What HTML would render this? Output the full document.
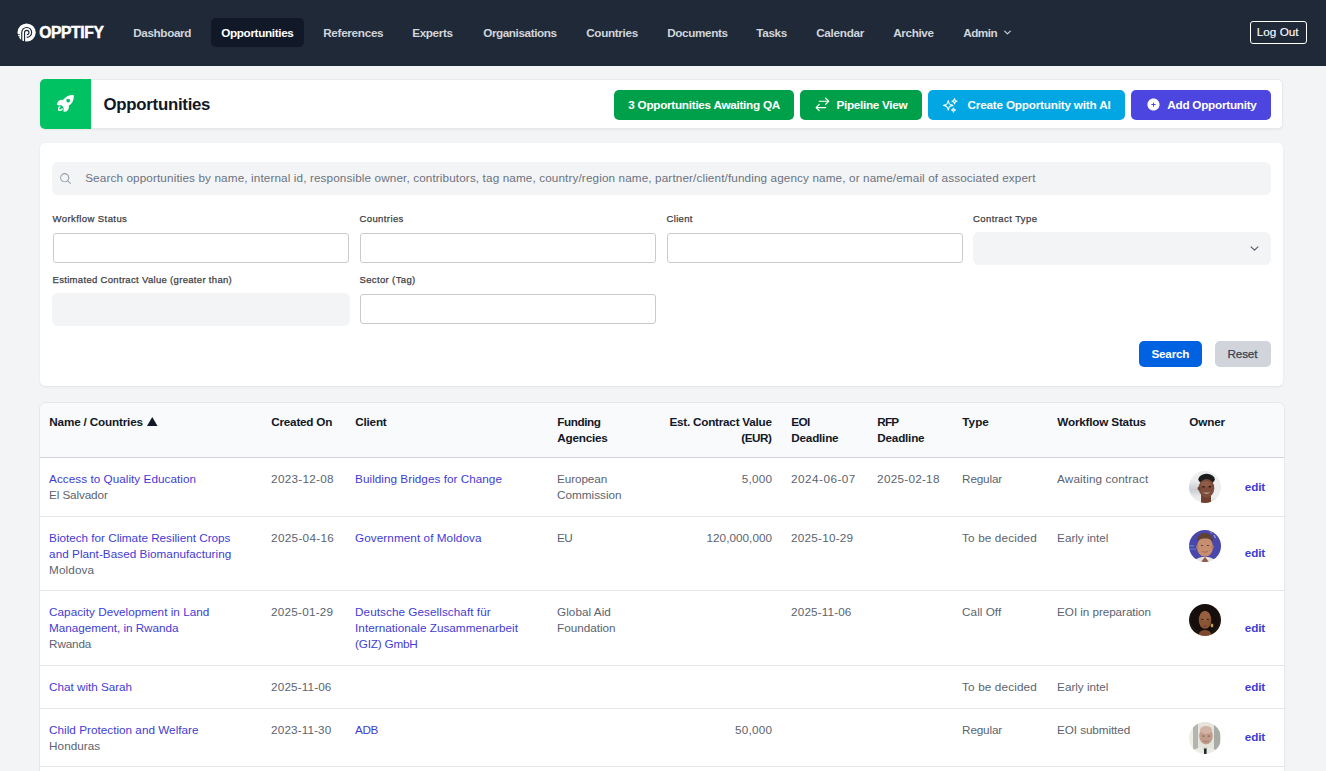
<!DOCTYPE html><html><head><meta charset="utf-8"><style>
html,body{margin:0;padding:0}
body{width:1326px;height:771px;overflow:hidden;position:relative;background:#f3f4f6;font-family:"Liberation Sans",sans-serif;}
.t{position:absolute;white-space:nowrap}
.b{position:absolute;box-sizing:border-box}
</style></head><body>
<div class="b" style="left:0px;top:0px;width:1326px;height:66px;background:#1f2937"></div>
<svg class="b" style="left:15px;top:21px;" width="24" height="24" viewBox="0 0 24 24"><circle cx="11.6" cy="11.5" r="9.1" fill="#fff"/>
<path d="M6.75 22V11.4A4.95 4.95 0 1 1 11.7 16.35" fill="none" stroke="#1f2937" stroke-width="1.15"/>
<path d="M9.55 22V11.5A2.2 2.2 0 1 1 11.75 13.7" fill="none" stroke="#1f2937" stroke-width="1.15"/>
<path d="M1.5 13.6h3.3M1.8 15.8h3" stroke="#1f2937" stroke-width="0.8"/></svg>
<div class="t" style="left:39.3px;letter-spacing:-0.371px;top:23.0px;font-size:15.6px;line-height:20px;font-weight:700;color:#fff;-webkit-text-stroke:0.5px #fff;">OPPTIFY</div>
<div class="b" style="left:211px;top:18px;width:93px;height:29px;background:#111827;border-radius:5px"></div>
<div class="t" style="left:133.2px;letter-spacing:-0.375px;top:25px;font-size:11.73px;line-height:15px;font-weight:700;color:#d1d5db;">Dashboard</div>
<div class="t" style="left:221.2px;letter-spacing:-0.344px;top:25px;font-size:11.73px;line-height:15px;font-weight:700;color:#fff;">Opportunities</div>
<div class="t" style="left:323.2px;letter-spacing:-0.307px;top:25px;font-size:11.73px;line-height:15px;font-weight:700;color:#d1d5db;">References</div>
<div class="t" style="left:412.2px;letter-spacing:-0.376px;top:25px;font-size:11.73px;line-height:15px;font-weight:700;color:#d1d5db;">Experts</div>
<div class="t" style="left:483.2px;letter-spacing:-0.416px;top:25px;font-size:11.73px;line-height:15px;font-weight:700;color:#d1d5db;">Organisations</div>
<div class="t" style="left:586.2px;letter-spacing:-0.338px;top:25px;font-size:11.73px;line-height:15px;font-weight:700;color:#d1d5db;">Countries</div>
<div class="t" style="left:667.2px;letter-spacing:-0.373px;top:25px;font-size:11.73px;line-height:15px;font-weight:700;color:#d1d5db;">Documents</div>
<div class="t" style="left:756.2px;letter-spacing:-0.298px;top:25px;font-size:11.73px;line-height:15px;font-weight:700;color:#d1d5db;">Tasks</div>
<div class="t" style="left:816.2px;letter-spacing:-0.287px;top:25px;font-size:11.73px;line-height:15px;font-weight:700;color:#d1d5db;">Calendar</div>
<div class="t" style="left:893.2px;letter-spacing:-0.359px;top:25px;font-size:11.73px;line-height:15px;font-weight:700;color:#d1d5db;">Archive</div>
<div class="t" style="left:963.2px;letter-spacing:-0.502px;top:25px;font-size:11.73px;line-height:15px;font-weight:700;color:#d1d5db;">Admin</div>
<svg class="b" style="left:1003px;top:28px;" width="9" height="9" viewBox="0 0 24 24"><path d="m19.5 8.25-7.5 7.5-7.5-7.5" fill="none" stroke="#d1d5db" stroke-width="3" stroke-linecap="round" stroke-linejoin="round"/></svg>
<div class="b" style="left:1250px;top:21px;width:57px;height:23px;border:1px solid #fff;border-radius:3px"></div>
<div class="t" style="left:1256.8px;letter-spacing:0.007px;-webkit-text-stroke:0.12px #fff;top:24.200000000000003px;font-size:11.73px;line-height:15px;font-weight:400;color:#fff;">Log Out</div>
<div class="b" style="left:40px;top:79px;width:1243px;height:50px;background:#fff;border-radius:5px;border:1px solid #e8e9ec;box-shadow:0 1px 2px rgba(0,0,0,.05)"></div>
<div class="b" style="left:40px;top:79px;width:51px;height:50px;background:#00c262;border-radius:5px 0 0 5px"></div>
<svg class="b" style="left:56.3px;top:94.1px;" width="18.8" height="18.8" viewBox="0 0 20 20"><path fill="#fff" fill-rule="evenodd" d="M4.606 12.97a.75.75 0 0 1-.134 1.051 2.494 2.494 0 0 0-.93 2.437 2.494 2.494 0 0 0 2.437-.93.75.75 0 1 1 1.186.918 3.995 3.995 0 0 1-4.482 1.332.75.75 0 0 1-.461-.461 3.994 3.994 0 0 1 1.332-4.482.75.75 0 0 1 1.052.134Z"/>
<path fill="#fff" fill-rule="evenodd" d="M5.752 12A13.07 13.07 0 0 0 8 14.248v4.002c0 .414.336.75.75.75a5 5 0 0 0 4.797-6.414 12.984 12.984 0 0 0 5.45-10.848.75.75 0 0 0-.735-.735 12.984 12.984 0 0 0-10.849 5.45A5 5 0 0 0 1 11.25c.001.414.337.75.751.75h4.002ZM13 9a2 2 0 1 0 0-4 2 2 0 0 0 0 4Z"/></svg>
<div class="t" style="left:103.5px;letter-spacing:-0.262px;top:93.7px;font-size:16.81px;line-height:22px;font-weight:700;color:#111827;">Opportunities</div>
<div class="b" style="left:614px;top:90px;width:180px;height:30px;background:#00a04a;border-radius:5px"></div>
<div class="t" style="left:628.3px;letter-spacing:-0.268px;top:96.8px;font-size:11.73px;line-height:15px;font-weight:700;color:#fff;">3 Opportunities Awaiting QA</div>
<div class="b" style="left:800px;top:90px;width:122px;height:30px;background:#00a04a;border-radius:5px"></div>
<svg class="b" style="left:813.6px;top:96.3px;" width="16.8" height="16.8" viewBox="0 0 24 24"><path d="M7.5 21 3 16.5m0 0L7.5 12M3 16.5h13.5m0-13.5L21 7.5m0 0L16.5 12M21 7.5H7.5" fill="none" stroke="#fff" stroke-width="1.7" stroke-linecap="round" stroke-linejoin="round"/></svg>
<div class="t" style="left:836.5px;letter-spacing:-0.296px;top:96.8px;font-size:11.73px;line-height:15px;font-weight:700;color:#fff;">Pipeline View</div>
<div class="b" style="left:928px;top:90px;width:197px;height:30px;background:#02a6e3;border-radius:5px"></div>
<svg class="b" style="left:941.7px;top:96.7px;" width="16.7" height="16.7" viewBox="0 0 24 24"><path d="M9.813 15.904 9 18.75l-.813-2.846a4.5 4.5 0 0 0-3.09-3.09L2.25 12l2.846-.813a4.5 4.5 0 0 0 3.09-3.09L9 5.25l.813 2.846a4.5 4.5 0 0 0 3.09 3.09L15.75 12l-2.846.813a4.5 4.5 0 0 0-3.09 3.09ZM18.259 8.715 18 9.75l-.259-1.035a3.375 3.375 0 0 0-2.455-2.456L14.25 6l1.036-.259a3.375 3.375 0 0 0 2.455-2.456L18 2.25l.259 1.035a3.375 3.375 0 0 0 2.456 2.456L21.75 6l-1.035.259a3.375 3.375 0 0 0-2.456 2.456ZM16.894 20.567 16.5 21.75l-.394-1.183a2.25 2.25 0 0 0-1.423-1.423L13.5 18.75l1.183-.394a2.25 2.25 0 0 0 1.423-1.423l.394-1.183.394 1.183a2.25 2.25 0 0 0 1.423 1.423l1.183.394-1.183.394a2.25 2.25 0 0 0-1.423 1.423Z" fill="none" stroke="#fff" stroke-width="1.6" stroke-linecap="round" stroke-linejoin="round"/></svg>
<div class="t" style="left:967.5px;letter-spacing:-0.194px;top:96.8px;font-size:11.73px;line-height:15px;font-weight:700;color:#fff;">Create Opportunity with AI</div>
<div class="b" style="left:1131px;top:90px;width:140px;height:30px;background:#4c45e0;border-radius:5px"></div>
<svg class="b" style="left:1145.5px;top:97px;" width="15" height="15" viewBox="0 0 24 24"><path fill="#fff" fill-rule="evenodd" d="M12 2.25c-5.385 0-9.75 4.365-9.75 9.75s4.365 9.75 9.75 9.75 9.75-4.365 9.75-9.75S17.385 2.25 12 2.25ZM12.75 9a.75.75 0 0 0-1.5 0v2.25H9a.75.75 0 0 0 0 1.5h2.25V15a.75.75 0 0 0 1.5 0v-2.25H15a.75.75 0 0 0 0-1.5h-2.25V9Z"/></svg>
<div class="t" style="left:1167.3px;letter-spacing:-0.251px;top:96.8px;font-size:11.73px;line-height:15px;font-weight:700;color:#fff;">Add Opportunity</div>
<div class="b" style="left:40px;top:143px;width:1243px;height:243px;background:#fff;border-radius:5px;box-shadow:0 1px 2px rgba(0,0,0,.08)"></div>
<div class="b" style="left:52px;top:162px;width:1219px;height:33px;background:#f3f4f6;border-radius:6px"></div>
<svg class="b" style="left:59px;top:172px;" width="13" height="13" viewBox="0 0 24 24"><path d="m21 21-5.197-5.197m0 0A7.5 7.5 0 1 0 5.196 5.196a7.5 7.5 0 0 0 10.607 10.607Z" fill="none" stroke="#9ca3af" stroke-width="2" stroke-linecap="round"/></svg>
<div class="t" style="left:85.2px;letter-spacing:0.121px;top:170.3px;font-size:11.73px;line-height:15px;font-weight:400;color:#6b7280;">Search opportunities by name, internal id, responsible owner, contributors, tag name, country/region name, partner/client/funding agency name, or name/email of associated expert</div>
<div class="t" style="left:52.5px;letter-spacing:0.422px;-webkit-text-stroke:0.25px #404044;top:212.8px;font-size:9.5px;line-height:12px;font-weight:400;color:#404044;">Workflow Status</div>
<div class="t" style="left:359.5px;letter-spacing:0.399px;-webkit-text-stroke:0.25px #404044;top:212.8px;font-size:9.5px;line-height:12px;font-weight:400;color:#404044;">Countries</div>
<div class="t" style="left:666.5px;letter-spacing:0.332px;-webkit-text-stroke:0.25px #404044;top:212.8px;font-size:9.5px;line-height:12px;font-weight:400;color:#404044;">Client</div>
<div class="t" style="left:973px;letter-spacing:0.422px;-webkit-text-stroke:0.25px #404044;top:212.8px;font-size:9.5px;line-height:12px;font-weight:400;color:#404044;">Contract Type</div>
<div class="t" style="left:52.5px;letter-spacing:0.317px;-webkit-text-stroke:0.25px #404044;top:273.8px;font-size:9.5px;line-height:12px;font-weight:400;color:#404044;">Estimated Contract Value (greater than)</div>
<div class="t" style="left:359.5px;letter-spacing:0.361px;-webkit-text-stroke:0.25px #404044;top:273.8px;font-size:9.5px;line-height:12px;font-weight:400;color:#404044;">Sector (Tag)</div>
<div class="b" style="left:53px;top:233px;width:296px;height:30px;background:#fff;border:1px solid #c9cacc;border-radius:3px"></div>
<div class="b" style="left:360px;top:233px;width:296px;height:30px;background:#fff;border:1px solid #c9cacc;border-radius:3px"></div>
<div class="b" style="left:667px;top:233px;width:296px;height:30px;background:#fff;border:1px solid #c9cacc;border-radius:3px"></div>
<div class="b" style="left:973px;top:232px;width:298px;height:33px;background:#f3f4f6;border-radius:6px"></div>
<svg class="b" style="left:1248.5px;top:243px;" width="11" height="11" viewBox="0 0 24 24"><path d="m19.5 8.25-7.5 7.5-7.5-7.5" fill="none" stroke="#4b5563" stroke-width="2.2" stroke-linecap="round" stroke-linejoin="round"/></svg>
<div class="b" style="left:52px;top:293px;width:298px;height:33px;background:#f3f4f6;border-radius:6px"></div>
<div class="b" style="left:360px;top:294px;width:296px;height:30px;background:#fff;border:1px solid #c9cacc;border-radius:3px"></div>
<div class="b" style="left:1139px;top:341px;width:63px;height:26px;background:#0062e0;border-radius:5px"></div>
<div class="t" style="left:1151.5px;letter-spacing:-0.239px;top:346.3px;font-size:11.73px;line-height:15px;font-weight:700;color:#fff;">Search</div>
<div class="b" style="left:1215px;top:341px;width:56px;height:26px;background:#d1d5db;border-radius:5px"></div>
<div class="t" style="left:1227.5px;letter-spacing:-0.161px;-webkit-text-stroke:0.25px #374151;top:346.3px;font-size:11.73px;line-height:15px;font-weight:400;color:#374151;">Reset</div>
<div class="b" style="left:40px;top:403px;width:1244px;height:368px;background:#fff;border-radius:6px 6px 0 0;box-shadow:0 0 0 1px #e5e7eb"></div>
<div class="b" style="left:40px;top:403px;width:1244px;height:55px;background:#f9fafb;border-radius:6px 6px 0 0;border-bottom:1px solid #d1d5db"></div>
<div class="t" style="left:49.3px;letter-spacing:-0.174px;top:414px;font-size:11.73px;line-height:15px;font-weight:700;color:#111827;">Name / Countries</div>
<div class="t" style="left:271.3px;letter-spacing:-0.242px;top:414px;font-size:11.73px;line-height:15px;font-weight:700;color:#111827;">Created On</div>
<div class="t" style="left:355.3px;letter-spacing:-0.22px;top:414px;font-size:11.73px;line-height:15px;font-weight:700;color:#111827;">Client</div>
<div class="t" style="left:557.3px;letter-spacing:-0.421px;top:414px;font-size:11.73px;line-height:15px;font-weight:700;color:#111827;">Funding</div>
<div class="t" style="left:557.3px;letter-spacing:-0.24px;top:430px;font-size:11.73px;line-height:15px;font-weight:700;color:#111827;">Agencies</div>
<div class="t" style="left:962.3px;letter-spacing:0.037px;top:414px;font-size:11.73px;line-height:15px;font-weight:700;color:#111827;">Type</div>
<div class="t" style="left:1057.3px;letter-spacing:-0.197px;top:414px;font-size:11.73px;line-height:15px;font-weight:700;color:#111827;">Workflow Status</div>
<div class="t" style="left:1189.3px;letter-spacing:-0.178px;top:414px;font-size:11.73px;line-height:15px;font-weight:700;color:#111827;">Owner</div>
<div class="t" style="left:791.3px;letter-spacing:-0.627px;top:414px;font-size:11.73px;line-height:15px;font-weight:700;color:#111827;">EOI</div>
<div class="t" style="left:791.3px;letter-spacing:-0.217px;top:430px;font-size:11.73px;line-height:15px;font-weight:700;color:#111827;">Deadline</div>
<div class="t" style="left:877.3px;letter-spacing:-0.845px;top:414px;font-size:11.73px;line-height:15px;font-weight:700;color:#111827;">RFP</div>
<div class="t" style="left:877.3px;letter-spacing:-0.217px;top:430px;font-size:11.73px;line-height:15px;font-weight:700;color:#111827;">Deadline</div>
<svg class="b" style="left:147px;top:417px;" width="10.5" height="9" viewBox="0 0 10.5 9"><path d="M5.25 0 10.5 9H0Z" fill="#111827"/></svg>
<div class="t" style="right:554.24px;letter-spacing:-0.235px;top:414px;font-size:11.73px;line-height:15px;font-weight:700;color:#111827;">Est. Contract Value</div>
<div class="t" style="right:554.43px;letter-spacing:-0.434px;top:430px;font-size:11.73px;line-height:15px;font-weight:700;color:#111827;">(EUR)</div>
<div class="b" style="left:40px;top:516px;width:1244px;height:1px;background:#e5e7eb"></div>
<div class="t" style="left:49.1px;letter-spacing:0.038px;top:471px;font-size:11.73px;line-height:15px;font-weight:400;color:#3f3cd4;">Access to Quality Education</div>
<div class="t" style="left:49.1px;letter-spacing:-0.123px;top:487px;font-size:11.73px;line-height:15px;font-weight:400;color:#5b6370;">El Salvador</div>
<div class="t" style="left:271.1px;letter-spacing:0.276px;top:471px;font-size:11.73px;line-height:15px;font-weight:400;color:#5b6370;">2023-12-08</div>
<div class="t" style="left:355.1px;letter-spacing:0.035px;top:471px;font-size:11.73px;line-height:15px;font-weight:400;color:#3f3cd4;">Building Bridges for Change</div>
<div class="t" style="left:557.1px;letter-spacing:-0.102px;top:471px;font-size:11.73px;line-height:15px;font-weight:400;color:#5b6370;">European</div>
<div class="t" style="left:557.1px;letter-spacing:-0.001px;top:487px;font-size:11.73px;line-height:15px;font-weight:400;color:#5b6370;">Commission</div>
<div class="t" style="right:553.8px;letter-spacing:0.204px;top:471px;font-size:11.73px;line-height:15px;font-weight:400;color:#5b6370;">5,000</div>
<div class="t" style="left:791.1px;letter-spacing:0.47px;top:471px;font-size:11.73px;line-height:15px;font-weight:400;color:#5b6370;">2024-06-07</div>
<div class="t" style="left:877.1px;letter-spacing:0.265px;top:471px;font-size:11.73px;line-height:15px;font-weight:400;color:#5b6370;">2025-02-18</div>
<div class="t" style="left:962.1px;letter-spacing:-0.165px;top:471px;font-size:11.73px;line-height:15px;font-weight:400;color:#5b6370;">Regular</div>
<div class="t" style="left:1057.1px;letter-spacing:0.128px;top:471px;font-size:11.73px;line-height:15px;font-weight:400;color:#5b6370;">Awaiting contract</div>
<svg class="b" style="left:1189px;top:470.5px;" width="32" height="32" viewBox="0 0 32 32"><defs><clipPath id="c1"><circle cx="16" cy="16" r="16"/></clipPath><filter id="f1" x="-10%" y="-10%" width="120%" height="120%"><feGaussianBlur stdDeviation="0.7"/></filter><linearGradient id="g1" x1="0" y1="0" x2="0" y2="1"><stop offset="0" stop-color="#eef0f2"/><stop offset="0.45" stop-color="#c9ccd0"/><stop offset="0.7" stop-color="#e4e6e9"/><stop offset="1" stop-color="#f2f3f5"/></linearGradient></defs>
<g clip-path="url(#c1)"><g filter="url(#f1)"><rect width="32" height="32" fill="#eceef0"/><rect x="-2" y="8" width="13" height="24" fill="url(#g1)"/>
<path d="M20 32c1-3 3-5 8-5v5z" fill="#e2e4e6"/><rect x="12" y="23" width="10" height="10" fill="#70412e"/>
<ellipse cx="17.6" cy="8.2" rx="8.2" ry="5.4" fill="#1a1a1a"/><ellipse cx="17.5" cy="17.2" rx="7.8" ry="9.3" fill="#7e4d3a"/><ellipse cx="17" cy="13" rx="5" ry="3" fill="#8e5c47"/><ellipse cx="10" cy="17.5" rx="1.4" ry="2" fill="#6a3f2e"/>
<ellipse cx="14.5" cy="15.8" rx="1.5" ry="0.7" fill="#2a1812"/><ellipse cx="20.8" cy="15.8" rx="1.5" ry="0.7" fill="#2a1812"/>
<path d="M13.6 21.2q3.9 2.8 7.8 0q-3.9 1-7.8 0z" fill="#f4ece8"/></g></g></svg>
<div class="t" style="left:1244.8px;letter-spacing:-0.135px;top:478.6px;font-size:11.73px;line-height:15px;font-weight:700;color:#3f3cd4;">edit</div>
<div class="b" style="left:40px;top:590px;width:1244px;height:1px;background:#e5e7eb"></div>
<div class="t" style="left:49.1px;letter-spacing:-0.011px;top:530px;font-size:11.73px;line-height:15px;font-weight:400;color:#3f3cd4;">Biotech for Climate Resilient Crops</div>
<div class="t" style="left:49.1px;letter-spacing:0.033px;top:546px;font-size:11.73px;line-height:15px;font-weight:400;color:#3f3cd4;">and Plant-Based Biomanufacturing</div>
<div class="t" style="left:49.1px;letter-spacing:0.098px;top:562px;font-size:11.73px;line-height:15px;font-weight:400;color:#5b6370;">Moldova</div>
<div class="t" style="left:271.1px;letter-spacing:0.307px;top:530px;font-size:11.73px;line-height:15px;font-weight:400;color:#5b6370;">2025-04-16</div>
<div class="t" style="left:355.1px;letter-spacing:0.065px;top:530px;font-size:11.73px;line-height:15px;font-weight:400;color:#3f3cd4;">Government of Moldova</div>
<div class="t" style="left:557.1px;letter-spacing:-0.682px;top:530px;font-size:11.73px;line-height:15px;font-weight:400;color:#5b6370;">EU</div>
<div class="t" style="right:553.97px;letter-spacing:0.031px;top:530px;font-size:11.73px;line-height:15px;font-weight:400;color:#5b6370;">120,000,000</div>
<div class="t" style="left:791.1px;letter-spacing:0.229px;top:530px;font-size:11.73px;line-height:15px;font-weight:400;color:#5b6370;">2025-10-29</div>
<div class="t" style="left:962.1px;letter-spacing:0.137px;top:530px;font-size:11.73px;line-height:15px;font-weight:400;color:#5b6370;">To be decided</div>
<div class="t" style="left:1057.1px;letter-spacing:-0.019px;top:530px;font-size:11.73px;line-height:15px;font-weight:400;color:#5b6370;">Early intel</div>
<svg class="b" style="left:1189px;top:529.5px;" width="32" height="32" viewBox="0 0 32 32"><defs><clipPath id="c2"><circle cx="16" cy="16" r="16"/></clipPath><filter id="f2" x="-10%" y="-10%" width="120%" height="120%"><feGaussianBlur stdDeviation="0.7"/></filter></defs>
<g clip-path="url(#c2)"><g filter="url(#f2)"><rect width="32" height="32" fill="#4a47a9"/><rect x="0" y="15" width="5" height="1.6" fill="#5778c4"/><rect x="1" y="18.5" width="6" height="1.2" fill="#5574c0"/><path d="M21 1.5l2 2M25 5l1.5 3" stroke="#b9bce6" stroke-width="1"/>
<path d="M5 32c1-3 5-5 11-5s10 2 11 5z" fill="#e7e3dc"/><path d="M12 32l4-5 4 5z" fill="#8a5a48"/>
<ellipse cx="16" cy="17" rx="8" ry="9.8" fill="#c68e6e"/><ellipse cx="8.4" cy="17" rx="1.2" ry="2" fill="#b67c60"/><ellipse cx="23.6" cy="17" rx="1.2" ry="2" fill="#b67c60"/>
<path d="M8 12c0-6 3-9 8-9s8 3 8 9c-1-2-3-3.5-8-3.5S9 10 8 12z" fill="#5e4232"/>
<ellipse cx="13" cy="15.5" rx="1.3" ry="0.6" fill="#5a3a2a"/><ellipse cx="19" cy="15.5" rx="1.3" ry="0.6" fill="#5a3a2a"/><path d="M13 21.5q3 1.5 6 0" stroke="#9a6048" stroke-width="0.8" fill="none"/></g></g></svg>
<div class="t" style="left:1244.8px;letter-spacing:-0.135px;top:545.1px;font-size:11.73px;line-height:15px;font-weight:700;color:#3f3cd4;">edit</div>
<div class="b" style="left:40px;top:665px;width:1244px;height:1px;background:#e5e7eb"></div>
<div class="t" style="left:49.1px;letter-spacing:0.022px;top:604px;font-size:11.73px;line-height:15px;font-weight:400;color:#3f3cd4;">Capacity Development in Land</div>
<div class="t" style="left:49.1px;letter-spacing:-0.046px;top:620px;font-size:11.73px;line-height:15px;font-weight:400;color:#3f3cd4;">Management, in Rwanda</div>
<div class="t" style="left:49.1px;letter-spacing:-0.165px;top:636px;font-size:11.73px;line-height:15px;font-weight:400;color:#5b6370;">Rwanda</div>
<div class="t" style="left:271.1px;letter-spacing:0.229px;top:604px;font-size:11.73px;line-height:15px;font-weight:400;color:#5b6370;">2025-01-29</div>
<div class="t" style="left:355.1px;letter-spacing:0.057px;top:604px;font-size:11.73px;line-height:15px;font-weight:400;color:#3f3cd4;">Deutsche Gesellschaft für</div>
<div class="t" style="left:355.1px;letter-spacing:0.023px;top:620px;font-size:11.73px;line-height:15px;font-weight:400;color:#3f3cd4;">Internationale Zusammenarbeit</div>
<div class="t" style="left:355.1px;letter-spacing:-0.199px;top:636px;font-size:11.73px;line-height:15px;font-weight:400;color:#3f3cd4;">(GIZ) GmbH</div>
<div class="t" style="left:557.1px;letter-spacing:0.03px;top:604px;font-size:11.73px;line-height:15px;font-weight:400;color:#5b6370;">Global Aid</div>
<div class="t" style="left:557.1px;letter-spacing:-0.024px;top:620px;font-size:11.73px;line-height:15px;font-weight:400;color:#5b6370;">Foundation</div>
<div class="t" style="left:791.1px;letter-spacing:0.128px;top:604px;font-size:11.73px;line-height:15px;font-weight:400;color:#5b6370;">2025-11-06</div>
<div class="t" style="left:962.1px;letter-spacing:0.027px;top:604px;font-size:11.73px;line-height:15px;font-weight:400;color:#5b6370;">Call Off</div>
<div class="t" style="left:1057.1px;letter-spacing:-0.068px;top:604px;font-size:11.73px;line-height:15px;font-weight:400;color:#5b6370;">EOI in preparation</div>
<svg class="b" style="left:1189px;top:603.5px;" width="32" height="32" viewBox="0 0 32 32"><defs><clipPath id="c3"><circle cx="16" cy="16" r="16"/></clipPath><filter id="f3" x="-10%" y="-10%" width="120%" height="120%"><feGaussianBlur stdDeviation="0.7"/></filter></defs>
<g clip-path="url(#c3)"><g filter="url(#f3)"><rect width="32" height="32" fill="#1c130d"/><ellipse cx="16" cy="14" rx="14" ry="14" fill="#140d08"/>
<path d="M9 32c1-4 3-6 7-6s6 2 7 6z" fill="#7d4a2e"/>
<ellipse cx="16" cy="16" rx="6.3" ry="8.8" fill="#8a5535"/><ellipse cx="16" cy="12" rx="5" ry="5" fill="#96603f"/>
<ellipse cx="13.3" cy="15.2" rx="1.3" ry="0.5" fill="#2a1810"/><ellipse cx="18.8" cy="15.2" rx="1.3" ry="0.5" fill="#2a1810"/>
<ellipse cx="16" cy="22" rx="2" ry="0.8" fill="#7a3a2e"/><ellipse cx="23" cy="21.5" rx="1.4" ry="2" fill="#c49a48"/></g></g></svg>
<div class="t" style="left:1244.8px;letter-spacing:-0.135px;top:619.6px;font-size:11.73px;line-height:15px;font-weight:700;color:#3f3cd4;">edit</div>
<div class="b" style="left:40px;top:708px;width:1244px;height:1px;background:#e5e7eb"></div>
<div class="t" style="left:49.1px;letter-spacing:-0.025px;top:679px;font-size:11.73px;line-height:15px;font-weight:400;color:#3f3cd4;">Chat with Sarah</div>
<div class="t" style="left:271.1px;letter-spacing:0.128px;top:679px;font-size:11.73px;line-height:15px;font-weight:400;color:#5b6370;">2025-11-06</div>
<div class="t" style="left:962.1px;letter-spacing:0.137px;top:679px;font-size:11.73px;line-height:15px;font-weight:400;color:#5b6370;">To be decided</div>
<div class="t" style="left:1057.1px;letter-spacing:-0.019px;top:679px;font-size:11.73px;line-height:15px;font-weight:400;color:#5b6370;">Early intel</div>
<div class="t" style="left:1244.8px;letter-spacing:-0.135px;top:678.6px;font-size:11.73px;line-height:15px;font-weight:700;color:#3f3cd4;">edit</div>
<div class="b" style="left:40px;top:766px;width:1244px;height:1px;background:#e5e7eb"></div>
<div class="t" style="left:49.1px;letter-spacing:0.017px;top:722px;font-size:11.73px;line-height:15px;font-weight:400;color:#3f3cd4;">Child Protection and Welfare</div>
<div class="t" style="left:49.1px;letter-spacing:0.029px;top:738px;font-size:11.73px;line-height:15px;font-weight:400;color:#5b6370;">Honduras</div>
<div class="t" style="left:271.1px;letter-spacing:0.124px;top:722px;font-size:11.73px;line-height:15px;font-weight:400;color:#5b6370;">2023-11-30</div>
<div class="t" style="left:355.1px;letter-spacing:-0.396px;top:722px;font-size:11.73px;line-height:15px;font-weight:400;color:#3f3cd4;">ADB</div>
<div class="t" style="right:553.75px;letter-spacing:0.252px;top:722px;font-size:11.73px;line-height:15px;font-weight:400;color:#5b6370;">50,000</div>
<div class="t" style="left:962.1px;letter-spacing:-0.165px;top:722px;font-size:11.73px;line-height:15px;font-weight:400;color:#5b6370;">Regular</div>
<div class="t" style="left:1057.1px;letter-spacing:-0.098px;top:722px;font-size:11.73px;line-height:15px;font-weight:400;color:#5b6370;">EOI submitted</div>
<svg class="b" style="left:1189px;top:721.5px;" width="32" height="32" viewBox="0 0 32 32"><defs><clipPath id="c4"><circle cx="16" cy="16" r="16"/></clipPath><filter id="f4" x="-10%" y="-10%" width="120%" height="120%"><feGaussianBlur stdDeviation="0.7"/></filter></defs>
<g clip-path="url(#c4)"><g filter="url(#f4)"><rect width="32" height="32" fill="#e4e4dc"/><rect x="4" y="0" width="5" height="32" fill="#b3b6b0"/><rect x="25" y="0" width="6" height="32" fill="#a7aba5"/><rect x="0" y="0" width="4" height="32" fill="#f0eee4"/>
<path d="M2 32c2-5 7-7 14-7s11 2 14 7z" fill="#ecebe3"/><path d="M13 25l3 7 3-7z" fill="#dcd8cc"/><rect x="15" y="26.5" width="2.6" height="5.5" fill="#1f2b33"/>
<ellipse cx="17" cy="14" rx="6.8" ry="8.5" fill="#c29c8a"/><ellipse cx="17" cy="8" rx="6" ry="4" fill="#d2b2a2"/>
<ellipse cx="14.3" cy="14" rx="1.2" ry="0.5" fill="#6a4a40"/><ellipse cx="19.8" cy="14" rx="1.2" ry="0.5" fill="#6a4a40"/><path d="M14 19q3 1 6 0" stroke="#9a7466" stroke-width="0.7" fill="none"/></g></g></svg>
<div class="t" style="left:1244.8px;letter-spacing:-0.135px;top:729.1px;font-size:11.73px;line-height:15px;font-weight:700;color:#3f3cd4;">edit</div>
</body></html>
